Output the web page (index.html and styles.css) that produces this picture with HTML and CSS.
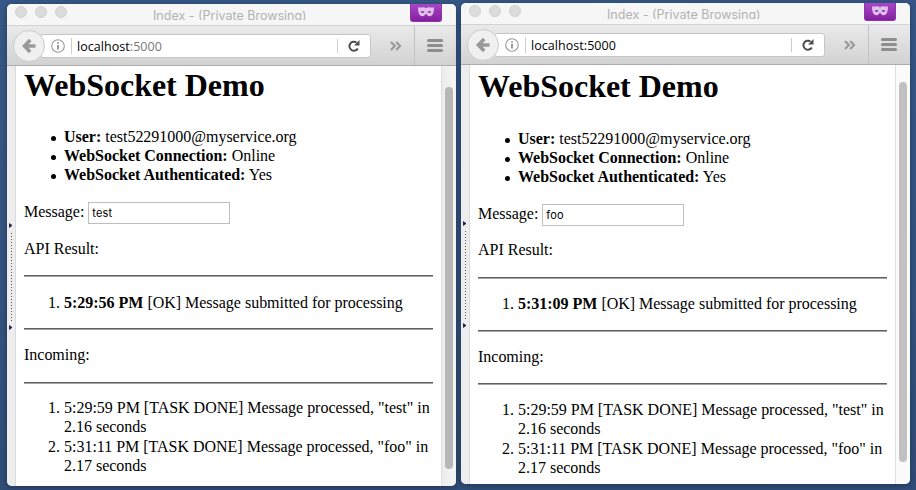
FILE: index.html
```
<!DOCTYPE html>
<html lang="en">
<head>
<meta charset="utf-8">
<title>WebSocket Demo</title>
<link rel="stylesheet" href="styles.css">
</head>
<body>
<svg width="0" height="0" class="defs">
  <symbol id="back" viewBox="0 0 14 16"><path d="M8.200 2 2.400 8l5.800 6M3 8h10.500" fill="none" stroke="#999" stroke-width="3.600"/></symbol>
  <symbol id="info" viewBox="0 0 14 14"><circle cx="7" cy="7" r="6.300" fill="none" stroke="#999" stroke-width="1.100"/><path d="M7 6v4.500M7 3.300v1.500" stroke="#888" stroke-width="1.700"/></symbol>
  <symbol id="reload" viewBox="0 0 12 12"><path d="M9.800 8.500A4.500 4.500 0 1 1 8.500 2.500" fill="none" stroke="#4c4c4c" stroke-width="2"/><path d="M11.500 0v5.500H6z" fill="#4c4c4c"/></symbol>
  <symbol id="more" viewBox="0 0 12 10"><path d="m1 1 4 4-4 4M6.300 1l4 4-4 4" fill="none" stroke="#999" stroke-width="2.200"/></symbol>
  <symbol id="mask" viewBox="0 0 16 10"><path fill-rule="evenodd" d="M0 .3C2 1 4-.2 6 .3L8 1.200 10 .3c2-.5 4 .7 6 0 0 5-1 9-4.500 9C9.500 9.300 9 7 8 7S6.500 9.300 4.500 9.300C1 9.300 0 5 0 .3zM2.500 5c1.500 1.400 3 1.300 4 .3-1-1.800-3-1.800-4-.3zm7 .3c1 1 2.500 1.100 4-.3-1-1.500-3-1.500-4 .3z" fill="#dfc0e8"/></symbol>
</svg>
<main class="desktop">
  <section class="window first">
    <header class="titlebar"><div class="lights"><i></i><i></i><i></i></div><div class="title">Index - (Private Browsing)</div><div class="private"><svg width="16" height="10"><use href="#mask"/></svg></div></header>
    <nav class="toolbar">
      <div class="back"><svg width="14" height="16"><use href="#back"/></svg></div>
      <div class="address"><svg class="info" width="14" height="14"><use href="#info"/></svg><span class="url">localhost<span class="port">:5000</span></span><span class="reload"><svg width="12" height="12"><use href="#reload"/></svg></span></div>
      <svg class="more" width="12" height="10"><use href="#more"/></svg>
      <div class="menu"><i></i><i></i><i></i></div>
    </nav>
    <div class="content">
      <aside class="grip"><b></b><span></span><b></b></aside>
      <article>
        <h1>WebSocket Demo</h1>
        <ul><li><strong>User:</strong> test52291000@myservice.org</li><li><strong>WebSocket Connection:</strong> Online</li><li><strong>WebSocket Authenticated:</strong> Yes</li></ul>
        <label class="message">Message: <input value="test"></label>
        <p class="api">API Result:</p>
        <hr>
        <ol class="result"><li><strong>5:29:56 PM</strong> [OK] Message submitted for processing</li></ol>
        <hr>
        <p class="incoming">Incoming:</p>
        <hr>
        <ol class="tasks"><li>5:29:59 PM [TASK DONE] Message processed, "test" in<br>2.16 seconds</li><li>5:31:11 PM [TASK DONE] Message processed, "foo" in<br>2.17 seconds</li></ol>
      </article>
      <div class="scroll"><i></i></div>
    </div>
  </section>
  <section class="window second">
    <header class="titlebar"><div class="lights"><i></i><i></i><i></i></div><div class="title">Index - (Private Browsing)</div><div class="private"><svg width="16" height="10"><use href="#mask"/></svg></div></header>
    <nav class="toolbar">
      <div class="back"><svg width="14" height="16"><use href="#back"/></svg></div>
      <div class="address"><svg class="info" width="14" height="14"><use href="#info"/></svg><span class="url">localhost<span class="port">:5000</span></span><span class="reload"><svg width="12" height="12"><use href="#reload"/></svg></span></div>
      <svg class="more" width="12" height="10"><use href="#more"/></svg>
      <div class="menu"><i></i><i></i><i></i></div>
    </nav>
    <div class="content">
      <aside class="grip"><b></b><span></span><b></b></aside>
      <article>
        <h1>WebSocket Demo</h1>
        <ul><li><strong>User:</strong> test52291000@myservice.org</li><li><strong>WebSocket Connection:</strong> Online</li><li><strong>WebSocket Authenticated:</strong> Yes</li></ul>
        <label class="message">Message: <input value="foo"></label>
        <p class="api">API Result:</p>
        <hr>
        <ol class="result"><li><strong>5:31:09 PM</strong> [OK] Message submitted for processing</li></ol>
        <hr>
        <p class="incoming">Incoming:</p>
        <hr>
        <ol class="tasks"><li>5:29:59 PM [TASK DONE] Message processed, "test" in<br>2.16 seconds</li><li>5:31:11 PM [TASK DONE] Message processed, "foo" in<br>2.17 seconds</li></ol>
      </article>
      <div class="scroll"><i></i></div>
    </div>
  </section>
</main>
</body>
</html>
```
FILE: styles.css
```
* { box-sizing: border-box; }
body { margin: 0; overflow: hidden; }
.defs { display: none; }
.desktop { width: 916px; height: 490px; display: flex; gap: 5px; padding: 3px 0 0 7px; background: linear-gradient(#365888, #34537f 60%, #304d78); }
.window { width: 449px; height: 482px; display: flex; flex-direction: column; border-radius: 5px; overflow: hidden; background: #fff; box-shadow: 0 1px 6px rgba(0, 0, 0, .35); }
.first { margin-top: 1px; }
.second { height: 481px; }
.titlebar { height: 22px; flex: none; display: flex; justify-content: space-between; background: #f6f6f6; border-bottom: 1px solid #d2d2d2; font: 12.500px/20px Inter, sans-serif; color: #b2b2b2; }
.lights { width: 95px; padding: 2px 0 0 8px; display: flex; gap: 8px; }
.lights i { width: 12px; height: 12px; border-radius: 50%; background: #dcdcdc; border: 1px solid #d0d0d0; }
.title { width: 165px; height: 16px; overflow: hidden; line-height: 23px; white-space: nowrap; padding-left: 4px; }
.private { width: 32px; height: 18px; margin: 0 14px 0 49px; padding-top: 3px; border-radius: 0 0 3px 3px; background: linear-gradient(#a947c8, #8420a0); border: 1px solid #8e35aa; border-top: 0; display: flex; justify-content: center; }
.toolbar { height: 40px; flex: none; display: flex; align-items: center; background: linear-gradient(#eaeaea, #d2d2d2); border-bottom: 1px solid #acacac; }
.back { width: 32px; height: 32px; margin-left: 6px; z-index: 1; border: 1px solid #ccc; border-radius: 50%; background: #f0f0f0; display: flex; align-items: center; justify-content: center; flex: none; }
.address { width: 331px; height: 24px; margin-left: -5px; display: flex; align-items: center; border: 1px solid #c6c6c6; border-radius: 3px; background: #fff; flex: none; }
.info { margin-left: 10px; }
.url { margin-left: 6px; border-left: 1px solid #ccc; padding-left: 5px; height: 16px; font: 12.500px/18px "Open Sans", sans-serif; color: #000; letter-spacing: .05px; }
.port { color: #777; }
.second .port { color: #000; }
.reload { height: 14px; margin-left: auto; width: 33px; border-left: 1px solid #ccc; display: flex; align-items: center; padding-left: 10px; }
.more { margin-left: 19px; }
.menu { height: 39px; width: 43px; margin-left: 12px; padding-left: 12px; border-left: 1px solid #c3c3c3; display: flex; flex-direction: column; justify-content: center; gap: 2px; }
.menu i { width: 16px; height: 3px; border-radius: 1.500px; background: #8e8e8e; }
.content { flex: 1; min-height: 0; display: flex; }
.grip { width: 9px; flex: none; padding: 157px 0 0 2px; background: #ededed; border-right: 1px solid #dadada; }
.grip b { display: block; width: 0; border-left: 3px solid #282356; border-top: 2.500px solid transparent; border-bottom: 2.500px solid transparent; height: 5px; }
.grip span { display: block; width: 1px; height: 89px; margin: 5px 0 3px 2px; background: repeating-linear-gradient(#555 0 1px, #ededed 1px 3px); }
.second .grip { padding-top: 156px; }
article { width: 425px; flex: none; padding: 1px 8px 0; font: 16px/19px "Liberation Serif", serif; color: #000; letter-spacing: -.015px; }
h1 { margin: 0; font-size: 32px; line-height: 37px; }
ul, ol, p { margin: 0; }
ul, ol { padding-left: 40px; }
ul { margin-top: 23px; list-style: none; }
ul li { height: 19px; white-space: nowrap; }
ul li::before { content: ""; display: inline-block; width: 5px; height: 5px; margin: 0 8px 1.500px -13px; border-radius: 50%; background: #000; }
.message { display: flex; height: 21px; gap: 4px; align-items: center; margin-top: 17px; white-space: nowrap; }
input { width: 142px; height: 22px; padding: 1px 3px 0; border: 1px solid #bebebe; font: 11px Inter, sans-serif; letter-spacing: .15px; color: #000; position: relative; top: 1px; }
.api { margin-top: 17px; }
hr { height: 2px; margin: 17px 0 0; border: 0; border-top: 1px solid #616161; border-bottom: 1px solid #a4a4a4; }
.result, .incoming { margin-top: 15px; }
.result { padding-top: 1px; margin-bottom: -1px; }
.incoming + hr { margin-top: 18px; }
.tasks { margin-top: 14px; line-height: 19.330px; white-space: nowrap; }
.second article { padding-top: 3px; }
.second ul { margin-top: 24px; }
.second .api { margin-top: 16px; }
.second hr { margin-top: 18px; }
.second .result { margin-top: 14px; }
.second .incoming + hr { margin-top: 17px; }
.second .tasks { margin-top: 15px; }
.scroll { flex: 1; border-left: 1px solid #dedede; background: linear-gradient(90deg, #ececec, #f6f6f6); padding: 21px 0 0 3px; }
.scroll i { display: block; width: 8px; height: 382px; border-radius: 4px; background: #b7b7b7; }
.second .scroll { padding-top: 17px; background: #fafafa; }
.second .scroll i { height: 380px; background: #c1c1c1; }
```
